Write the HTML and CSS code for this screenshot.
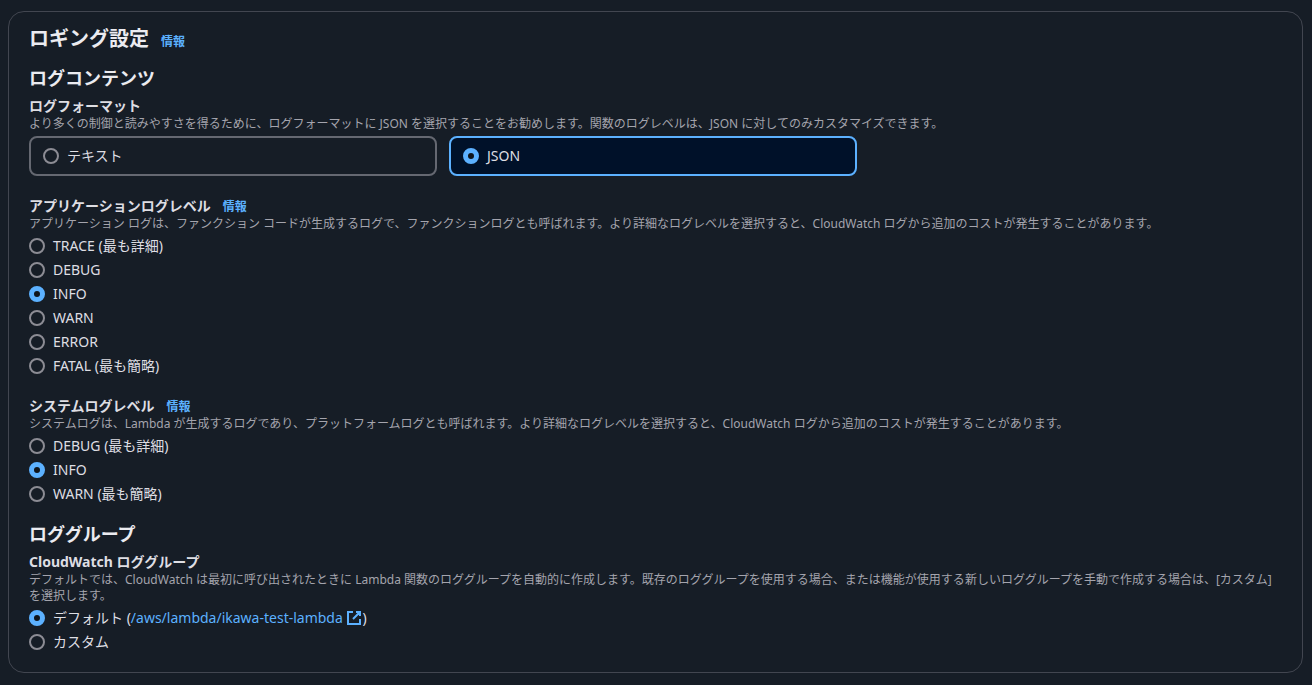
FILE: index.html
```html
<!DOCTYPE html>
<html lang="ja">
<head>
<meta charset="utf-8">
<title>ロギング設定</title>
<link rel="stylesheet" href="styles.css">
</head>
<body>
<main class="panel">
  <header class="panel-header">
    <h2 class="panel-title">ロギング設定</h2>
    <a class="info" href="#">情報</a>
  </header>

  <section class="section">
    <h3 class="section-title">ログコンテンツ</h3>
    <div class="fields">
      <div class="field" role="radiogroup" aria-labelledby="format-label">
        <div class="label" id="format-label">ログフォーマット</div>
        <p class="description">より多くの制御と読みやすさを得るために、ログフォーマットに JSON を選択することをお勧めします。関数のログレベルは、JSON に対してのみカスタマイズできます。</p>
        <div class="tiles">
          <label class="tile"><input class="radio" type="radio" name="format"><span>テキスト</span></label>
          <label class="tile tile-selected"><input class="radio" type="radio" name="format" checked><span>JSON</span></label>
        </div>
      </div>

      <div class="field" role="radiogroup" aria-labelledby="app-label">
        <div class="label-row"><div class="label" id="app-label">アプリケーションログレベル</div><a class="info" href="#">情報</a></div>
        <p class="description">アプリケーション ログは、ファンクション コードが生成するログで、ファンクションログとも呼ばれます。より詳細なログレベルを選択すると、CloudWatch ログから追加のコストが発生することがあります。</p>
        <div class="options">
          <label class="option"><input class="radio" type="radio" name="app"><span>TRACE (最も詳細)</span></label>
          <label class="option"><input class="radio" type="radio" name="app"><span>DEBUG</span></label>
          <label class="option"><input class="radio" type="radio" name="app" checked><span>INFO</span></label>
          <label class="option"><input class="radio" type="radio" name="app"><span>WARN</span></label>
          <label class="option"><input class="radio" type="radio" name="app"><span>ERROR</span></label>
          <label class="option"><input class="radio" type="radio" name="app"><span>FATAL (最も簡略)</span></label>
        </div>
      </div>

      <div class="field" role="radiogroup" aria-labelledby="system-label">
        <div class="label-row"><div class="label" id="system-label">システムログレベル</div><a class="info" href="#">情報</a></div>
        <p class="description">システムログは、Lambda が生成するログであり、プラットフォームログとも呼ばれます。より詳細なログレベルを選択すると、CloudWatch ログから追加のコストが発生することがあります。</p>
        <div class="options">
          <label class="option"><input class="radio" type="radio" name="system"><span>DEBUG (最も詳細)</span></label>
          <label class="option"><input class="radio" type="radio" name="system" checked><span>INFO</span></label>
          <label class="option"><input class="radio" type="radio" name="system"><span>WARN (最も簡略)</span></label>
        </div>
      </div>
    </div>
  </section>

  <section class="section">
    <h3 class="section-title">ロググループ</h3>
    <div class="field" role="radiogroup" aria-labelledby="group-label">
      <div class="label" id="group-label">CloudWatch ロググループ</div>
      <p class="description">デフォルトでは、CloudWatch は最初に呼び出されたときに Lambda 関数のロググループを自動的に作成します。既存のロググループを使用する場合、または機能が使用する新しいロググループを手動で作成する場合は、[カスタム] を選択します。</p>
      <div class="options">
        <label class="option"><input class="radio" type="radio" name="group" checked><span>デフォルト (<a class="link" href="#">/aws/lambda/ikawa-test-lambda <svg class="external" viewBox="0 0 16 16" aria-hidden="true"><path d="M7 2H2v12h12V9M10 2h4v4M14 2 7 9"/></svg></a>)</span></label>
        <label class="option"><input class="radio" type="radio" name="group"><span>カスタム</span></label>
      </div>
    </div>
  </section>
</main>
</body>
</html>
```
FILE: styles.css
```css
* {
  box-sizing: border-box;
}

body {
  margin: 0;
  padding: 11px 9px 12px 8px;
  background: #161d26;
  color: #dedee3;
  font: 14px/20px "Noto Sans", "Noto Sans CJK JP", sans-serif;
}

.panel {
  padding: 15px 20px 20px;
  border: 1px solid #424650;
  border-radius: 16px;
}

.panel-header {
  display: flex;
  align-items: baseline;
  gap: 12px;
  height: 24px;
  margin-bottom: 16px;
}

.panel-title,
.section-title {
  margin: 0;
  color: #ebebf0;
  font-weight: 700;
}

.panel-title {
  font-size: 20px;
  line-height: 24px;
}

.section {
  display: flex;
  flex-direction: column;
  gap: 7px;
}

.section + .section {
  margin-top: 19px;
}

.section-title {
  font-size: 18px;
  line-height: 22px;
}

.fields {
  display: flex;
  flex-direction: column;
  gap: 20px;
}

.label-row {
  display: flex;
  align-items: baseline;
  gap: 12px;
  height: 20px;
}

.label {
  height: 20px;
  font-weight: 700;
}

.info {
  color: #5cb1ff;
  font-size: 12px;
  font-weight: 700;
  line-height: 20px;
  text-decoration: none;
}

.description {
  margin: 0 0 4px;
  color: #a4a4ad;
  font-size: 12px;
  line-height: 16px;
}

.tiles {
  display: grid;
  grid-template-columns: 1fr 1fr;
  gap: 12px;
  max-width: 828px;
}

.tile {
  display: flex;
  align-items: center;
  gap: 8px;
  height: 40px;
  padding: 0 12px;
  border: 2px solid #656871;
  border-radius: 8px;
}

.tile-selected {
  border-color: #5cb1ff;
  background: #001129;
}

.options {
  display: flex;
  flex-direction: column;
  gap: 4px;
}

.option {
  display: flex;
  align-items: center;
  gap: 8px;
  height: 20px;
}

.radio {
  appearance: none;
  flex: none;
  width: 16px;
  height: 16px;
  margin: 0;
  border: 2px solid #8c8c94;
  border-radius: 50%;
}

.radio:checked {
  border: 5px solid #5cb1ff;
  background: #0f141a;
}

.link {
  color: #5cb1ff;
  text-decoration: none;
}

.external {
  width: 16px;
  height: 16px;
  vertical-align: -3px;
  fill: none;
  stroke: currentColor;
  stroke-width: 2;
}
```
